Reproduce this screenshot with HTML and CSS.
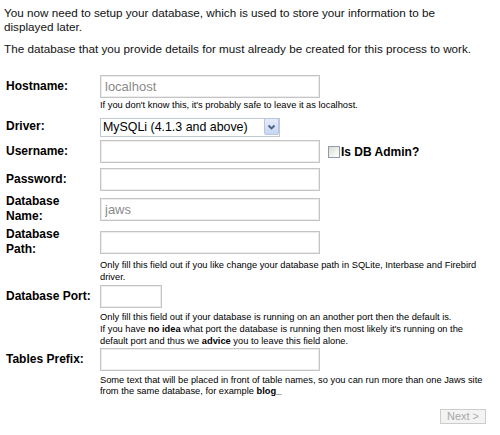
FILE: index.html
```html
<!DOCTYPE html>
<html>
<head>
<meta charset="utf-8">
<title>Database setup</title>
<link rel="stylesheet" href="styles.css">
</head>
<body>
<div class="page">
  <p class="intro">You now need to setup your database, which is used to store your information to be displayed later.</p>
  <p class="intro last">The database that you provide details for must already be created for this process to work.</p>

  <div class="form">
    <div class="row r-host">
      <label class="label">Hostname:</label>
      <input class="text" type="text" value="localhost">
    </div>
    <div class="hint h1">If you don't know this, it's probably safe to leave it as localhost.</div>

    <div class="row r-driver">
      <label class="label">Driver:</label>
      <div class="select-wrap">
        <select class="select"><option>MySQLi (4.1.3 and above)</option></select>
        <span class="arrow"><svg width="13" height="14" viewBox="0 0 13 14"><path d="M3.5 5.5 L6.5 8.5 L9.5 5.5" fill="none" stroke="#4d6185" stroke-width="1.8"/></svg></span>
      </div>
    </div>

    <div class="row r-user">
      <label class="label">Username:</label>
      <input class="text" type="text">
      <input class="check" type="checkbox">
      <span class="check-label">Is DB Admin?</span>
    </div>

    <div class="row r-pass">
      <label class="label">Password:</label>
      <input class="text" type="password">
    </div>

    <div class="row tall r-name">
      <label class="label">Database<br>Name:</label>
      <input class="text" type="text" value="jaws">
    </div>

    <div class="row tall r-path">
      <label class="label">Database<br>Path:</label>
      <input class="text" type="text">
    </div>
    <div class="hint h2">Only fill this field out if you like change your database path in SQLite, Interbase and Firebird driver.</div>

    <div class="row r-port">
      <label class="label">Database Port:</label>
      <input class="text short" type="text">
    </div>
    <div class="hint h3">Only fill this field out if your database is running on an another port then the default is.<br>If you have <b>no idea</b> what port the database is running then most likely it's running on the default port and thus we <b>advice</b> you to leave this field alone.</div>

    <div class="row r-prefix">
      <label class="label">Tables Prefix:</label>
      <input class="text" type="text">
    </div>
    <div class="hint h4">Some text that will be placed in front of table names, so you can run more than one Jaws site from the same database, for example <b>blog_</b></div>

    <div class="actions">
      <button class="next" type="button" disabled>Next &gt;</button>
    </div>
  </div>
</div>
</body>
</html>
```

FILE: styles.css
```css
html, body {
  margin: 0;
  padding: 0;
  background: #ffffff;
}

.page {
  padding: 6px 14px 0 4px;
  font-family: "Liberation Sans", Arial, sans-serif;
  color: #111;
}

.intro {
  margin: 0 0 8px 0;
  font-size: 11.7px;
  line-height: 14px;
}

.intro.last {
  margin-bottom: 0;
}

.form {
  display: flex;
  flex-direction: column;
}

.row {
  display: flex;
  align-items: center;
  height: 23px;
}

.row.tall {
  height: 30px;
}

.label {
  width: 96px;
  flex: none;
  box-sizing: border-box;
  padding-left: 2px;
  font-weight: bold;
  font-size: 12px;
  line-height: 15px;
  color: #000;
}

.text {
  box-sizing: border-box;
  width: 220px;
  height: 23px;
  margin: 0;
  padding: 0 4px;
  border: 1px solid #c4c4c4;
  box-shadow: inset 0 0 0 1px #ededed;
  background: #fff;
  font-family: "Liberation Sans", Arial, sans-serif;
  font-size: 13px;
  color: #8a8a8a;
  outline: none;
}

.text.short {
  width: 62px;
}

.select-wrap {
  position: relative;
  width: 180px;
  height: 19px;
}

.select {
  box-sizing: border-box;
  width: 180px;
  height: 19px;
  margin: 0;
  padding: 0 0 0 2px;
  border: 1px solid #c2c8d2;
  background: #fff;
  font-family: "Liberation Sans", Arial, sans-serif;
  font-size: 12.4px;
  color: #000;
  -webkit-appearance: none;
  appearance: none;
  border-radius: 0;
}

.arrow {
  position: absolute;
  right: 1px;
  top: 1px;
  width: 15px;
  height: 17px;
  box-sizing: border-box;
  border: 1px solid #b7c6e4;
  border-radius: 2px;
  background: linear-gradient(#e6edfb, #c7d6f2);
  display: flex;
  align-items: center;
  justify-content: center;
  pointer-events: none;
}

.check {
  -webkit-appearance: none;
  appearance: none;
  box-sizing: border-box;
  width: 12px;
  height: 12px;
  margin: 0 1px 0 8px;
  border: 1px solid #8c9bb0;
  background: linear-gradient(135deg, #dcdcd6, #ffffff);
}

.check-label {
  font-weight: bold;
  font-size: 12px;
  color: #000;
}

.hint {
  margin-left: 96px;
  font-size: 9.3px;
  line-height: 11.5px;
  color: #000;
}

.r-host { margin-top: 19px; }
.h1 { margin-top: 2px; }
.r-driver { margin-top: 5.5px; height: 19px; }
.r-user { margin-top: 4px; }
.r-pass { margin-top: 5px; }
.r-name { margin-top: 3px; }
.r-path { margin-top: 3px; }
.h2 { margin-top: 2px; line-height: 12px; }
.r-port { margin-top: 2px; }
.h3 { margin-top: 2.5px; line-height: 12px; }
.r-prefix { margin-top: 1px; }
.h4 { margin-top: 4px; }

.actions {
  display: flex;
  justify-content: flex-end;
  margin-top: 11px;
}

.next {
  box-sizing: border-box;
  width: 46px;
  height: 15px;
  margin: 0;
  padding: 0;
  border: 1px solid #cdcdcd;
  background: #f3f3f3;
  font-family: "Liberation Sans", Arial, sans-serif;
  font-size: 11px;
  line-height: 13px;
  color: #a8a8a8;
}
```
